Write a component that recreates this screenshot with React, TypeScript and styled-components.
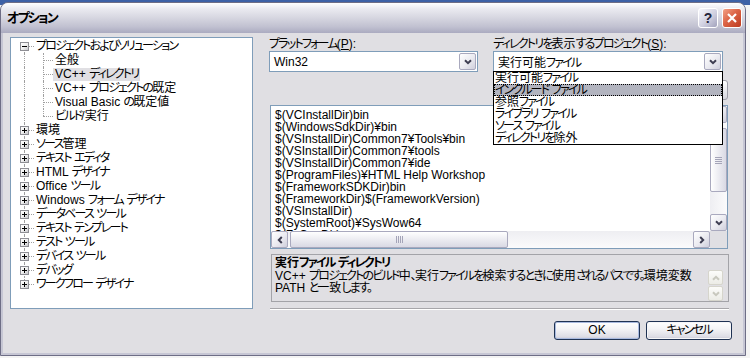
import React from 'react';
import styled, { createGlobalStyle } from 'styled-components';

const UI_FONT = '"Liberation Sans", "Noto Sans CJK JP", sans-serif';

const GlobalStyle = createGlobalStyle`
  html, body {
    margin: 0;
    padding: 0;
  }
  body {
    width: 750px;
    height: 358px;
    overflow: hidden;
    background: linear-gradient(#3D61A6 0, #3D61A6 5px, #F4F4F4 5px);
    font-family: ${UI_FONT};
    font-size: 12px;
    font-feature-settings: "palt";
    color: #000;
  }
`;

// kana in the old bitmap UI font are much narrower than in Noto, so tighten them
const KANA = /([\u3000-\u30ff\uff01-\uff60]+)/;

const Kana = styled.span`
  letter-spacing: -1.8px;
`;

const T = ({ children }: { children: string }) => (
  <>
    {children.split(KANA).map((part, i) => (KANA.test(part) ? <Kana key={i}>{part}</Kana> : part))}
  </>
);

const Window = styled.div`
  box-sizing: border-box;
  width: 746px;
  height: 354px;
  margin-top: 2px;
  display: flex;
  flex-direction: column;
  border: 1px solid #6E6E86;
  border-radius: 8px 8px 0 0;
  background: #C6C6D4;
  overflow: hidden;
`;

const TitleBar = styled.div`
  flex: none;
  height: 30px;
  display: flex;
  align-items: center;
  gap: 4px;
  padding: 0 3px 0 6px;
  background: linear-gradient(#FFFFFF 0%, #EAEAF0 20%, #D6D6E0 50%, #C0C0D0 80%, #ABABC0 100%);
`;

const TitleText = styled.div`
  flex: 1;
  font-size: 13px;
  font-weight: 700;
  line-height: 16px;
`;

const CaptionButton = styled.div<{ $close?: boolean }>`
  flex: none;
  width: 20px;
  height: 20px;
  box-sizing: border-box;
  display: flex;
  align-items: center;
  justify-content: center;
  border: 1px solid #FFFFFF;
  border-radius: 3px;
  color: #23233A;
  font-size: 14px;
  font-weight: 700;
  background: ${p =>
    p.$close
      ? 'linear-gradient(135deg, #F3A287 0%, #DC6446 45%, #BC3A1F 100%)'
      : 'linear-gradient(135deg, #F8F8FC 0%, #D0D0E0 55%, #A2A2BC 100%)'};
`;

const Body = styled.div`
  flex: 1;
  margin: 0 2px 2px;
  padding: 4px 0 0 7px;
  background: #E0DFE3;
  display: grid;
  grid-template-columns: 243px 463px;
  column-gap: 16px;
  align-items: start;
`;

/* ---------- tree ---------- */

const Tree = styled.div`
  box-sizing: border-box;
  height: 272px;
  padding: 1px 0 0 4px;
  border: 1px solid #7F9DB9;
  background: #FFFFFF;
`;

const Row = styled.div`
  display: flex;
  align-items: center;
  height: 14px;
  white-space: nowrap;
`;

type Line = 'full' | 'top' | 'bottom' | 'none';

const Gutter = styled.span<{ $v: Line; $h?: boolean }>`
  position: relative;
  flex: none;
  width: 19px;
  height: 14px;
  display: flex;
  align-items: center;
  justify-content: center;

  &::before {
    content: '';
    position: absolute;
    left: 9px;
    top: ${p => (p.$v === 'bottom' ? '7px' : '0')};
    bottom: ${p => (p.$v === 'top' ? '7px' : '0')};
    display: ${p => (p.$v === 'none' ? 'none' : 'block')};
    border-left: 1px dotted #A0A0A0;
  }

  &::after {
    content: '';
    position: absolute;
    left: 9px;
    right: 0;
    top: 7px;
    display: ${p => (p.$h ? 'block' : 'none')};
    border-top: 1px dotted #A0A0A0;
  }
`;

const Expander = styled.span<{ $open: boolean }>`
  position: relative;
  z-index: 1;
  width: 9px;
  height: 9px;
  box-sizing: border-box;
  border: 1px solid #8F8F95;
  background: linear-gradient(135deg, #FFFFFF 0%, #F0F0F0 50%, #C8C8CC 100%);

  &::before {
    content: '';
    position: absolute;
    left: 1px;
    right: 1px;
    top: 3px;
    height: 1px;
    background: #000;
  }

  &::after {
    content: '';
    position: absolute;
    top: 1px;
    bottom: 1px;
    left: 3px;
    width: 1px;
    background: #000;
    display: ${p => (p.$open ? 'none' : 'block')};
  }
`;

const ItemLabel = styled.span<{ $selected?: boolean }>`
  padding: 0 2px;
  line-height: 13px;
  background: ${p => (p.$selected ? '#E0DFE3' : 'transparent')};
`;

/* ---------- right side ---------- */

const Side = styled.div`
  display: flex;
  flex-direction: column;
`;

const ComboRow = styled.div`
  display: grid;
  grid-template-columns: 209px 230px;
  column-gap: 15px;
  position: relative;
  z-index: 5;
`;

const Field = styled.div`
  position: relative;
  display: flex;
  flex-direction: column;
`;

const Label = styled.div`
  height: 14px;
  line-height: 14px;
  white-space: nowrap;
`;

const Combo = styled.div`
  box-sizing: border-box;
  height: 21px;
  padding: 1px;
  display: flex;
  align-items: center;
  border: 1px solid #7F9DB9;
  background: #FFFFFF;
`;

const ComboText = styled.span`
  flex: 1;
  padding-left: 3px;
  white-space: nowrap;
`;

const ArrowButton = styled.div`
  flex: none;
  width: 17px;
  height: 17px;
  box-sizing: border-box;
  display: flex;
  align-items: center;
  justify-content: center;
  border: 1px solid #A9A9BE;
  border-radius: 2px;
  background: linear-gradient(135deg, #FFFFFF 0%, #EAEAF0 55%, #CFCFDC 100%);
`;

const DimArrow = styled.div`
  width: 15px;
  height: 15px;
  box-sizing: border-box;
  display: flex;
  align-items: center;
  justify-content: center;
  border: 1px solid #D6D5CC;
  border-radius: 2px;
  background: linear-gradient(#FCFCFA, #ECECE6);
`;

const rotation = { down: 0, up: 180, left: 90, right: -90 };

const ChevronSvg = styled.svg<{ $dir: keyof typeof rotation }>`
  display: block;
  transform: rotate(${p => rotation[p.$dir]}deg);
`;

const Chevron = ({ dir, color = '#3E3E52' }: { dir: keyof typeof rotation; color?: string }) => (
  <ChevronSvg $dir={dir} width="8" height="6" viewBox="0 0 8 6">
    <path d="M1 1.2 L4 4.2 L7 1.2" fill="none" stroke={color} strokeWidth="2" />
  </ChevronSvg>
);

const DropList = styled.div`
  position: absolute;
  top: 34px;
  left: 0;
  right: 0;
  box-sizing: border-box;
  height: 74px;
  border: 1px solid #000;
  background: #FFFFFF;
`;

const DropItem = styled.div<{ $active?: boolean }>`
  height: 12px;
  line-height: 12px;
  padding-left: 1px;
  white-space: nowrap;
  background: ${p => (p.$active ? '#B2B4BF' : 'transparent')};
  outline: ${p => (p.$active ? '1px dotted #000' : 'none')};
  outline-offset: -1px;
`;

const Toolbar = styled.div`
  margin: 8px 4px 0 0;
  height: 20px;
  display: flex;
  justify-content: flex-end;
  gap: 1px;
`;

const ToolButton = styled.div`
  width: 21px;
  height: 20px;
  box-sizing: border-box;
  border: 1px solid #9D9DA8;
  border-radius: 3px;
  background: linear-gradient(#FFFFFF, #D6D6DE);
`;

const ListBox = styled.div`
  box-sizing: border-box;
  width: 458px;
  height: 144px;
  margin: 5px 0 0 1px;
  border: 1px solid #7F9DB9;
  background: #FFFFFF;
  display: grid;
  grid-template-columns: 1fr 17px;
  grid-template-rows: 1fr 17px;
`;

const ListContent = styled.div`
  padding: 3px 4px 0;
  overflow: hidden;
  line-height: 12px;
  white-space: nowrap;
`;

const VScroll = styled.div`
  display: flex;
  flex-direction: column;
  background: linear-gradient(to right, #EEEEF2, #FBFBFC);
`;

const HScroll = styled.div`
  display: flex;
  background: linear-gradient(#EEEEF2, #FBFBFC);
`;

const Track = styled.div`
  flex: 1;
  display: flex;
`;

const Thumb = styled.div<{ $vertical?: boolean }>`
  box-sizing: border-box;
  display: flex;
  align-items: center;
  justify-content: center;
  border: 1px solid #A9A9BE;
  border-radius: 2px;
  ${p =>
    p.$vertical
      ? 'width: 17px; height: 64px; margin-top: 5px; background: linear-gradient(to right, #FFFFFF, #D9D9E4);'
      : 'height: 17px; width: 218px; margin-left: 2px; background: linear-gradient(#FFFFFF, #D9D9E4);'}
`;

const GripSvg = styled.svg<{ $vertical?: boolean }>`
  display: block;
  transform: rotate(${p => (p.$vertical ? 0 : 90)}deg);
`;

const Grip = ({ vertical }: { vertical?: boolean }) => (
  <GripSvg $vertical={vertical} width="7" height="7" viewBox="0 0 7 7">
    {[0.5, 2.5, 4.5, 6.5].map(y => (
      <line key={y} x1="0" y1={y} x2="7" y2={y} stroke="#A4A4B8" strokeWidth="1" />
    ))}
  </GripSvg>
);

const Corner = styled.div`
  background: #E0DFE3;
`;

const Description = styled.div`
  box-sizing: border-box;
  width: 458px;
  height: 48px;
  margin: 5px 0 0 2px;
  padding: 1px 5px 0 3px;
  border: 1px solid #A3A3A8;
  display: grid;
  grid-template-columns: 1fr 15px;
`;

const DescTitle = styled.div`
  font-weight: 700;
  line-height: 14px;
  white-space: nowrap;
`;

const DescText = styled.div`
  line-height: 12px;
  white-space: nowrap;
`;

const DescScroll = styled.div`
  display: flex;
  flex-direction: column;
  gap: 1px;
  padding-top: 14px;
`;

const Separator = styled.div`
  width: 459px;
  height: 1px;
  margin: 6px 0 0 1px;
  background: #A7A6AA;
  border-bottom: 1px solid #FFFFFF;
`;

const ButtonRow = styled.div`
  margin-top: 11px;
  display: flex;
  justify-content: flex-end;
  gap: 6px;
`;

const PushButton = styled.button<{ $default?: boolean }>`
  width: 86px;
  height: 19px;
  box-sizing: border-box;
  padding: 0;
  font-family: inherit;
  font-size: 12px;
  font-feature-settings: "palt";
  line-height: 15px;
  color: #000;
  border: 1px solid #1F3253;
  border-radius: 3px;
  background: linear-gradient(#FFFFFF 0%, #F4F4F6 40%, #DEDEE6 85%, #C9C9D5 100%);
  box-shadow: inset 0 0 0 1px ${p => (p.$default ? '#A9BADF' : '#F6F6F8')};
`;

/* ---------- data ---------- */

type TopItem = { label: string; children?: string[] };

const treeItems: TopItem[] = [
  {
    label: 'プロジェクトおよびソリューション',
    children: ['全般', 'VC++ ディレクトリ', 'VC++ プロジェクトの既定', 'Visual Basic の既定値', 'ビルド/実行'],
  },
  { label: '環境' },
  { label: 'ソース管理' },
  { label: 'テキスト エディタ' },
  { label: 'HTML デザイナ' },
  { label: 'Office ツール' },
  { label: 'Windows フォーム デザイナ' },
  { label: 'データベース ツール' },
  { label: 'テキスト テンプレート' },
  { label: 'テスト ツール' },
  { label: 'デバイス ツール' },
  { label: 'デバッグ' },
  { label: 'ワークフロー デザイナ' },
];

const selectedNode = 'VC++ ディレクトリ';

const dirKinds = ['実行可能ファイル', 'インクルード ファイル', '参照ファイル', 'ライブラリ ファイル', 'ソース ファイル', 'ディレクトリを除外'];

const paths = [
  '$(VCInstallDir)bin',
  '$(WindowsSdkDir)¥bin',
  '$(VSInstallDir)Common7¥Tools¥bin',
  '$(VSInstallDir)Common7¥tools',
  '$(VSInstallDir)Common7¥ide',
  '$(ProgramFiles)¥HTML Help Workshop',
  '$(FrameworkSDKDir)bin',
  '$(FrameworkDir)$(FrameworkVersion)',
  '$(VSInstallDir)',
  '$(SystemRoot)¥SysWow64',
  '$(FxCopDir)',
];

const App = () => {
  return (
    <>
      <GlobalStyle />
      <Window>
        <TitleBar>
          <TitleText>
            <T>オプション</T>
          </TitleText>
          <CaptionButton>?</CaptionButton>
          <CaptionButton $close>
            <svg width="10" height="10" viewBox="0 0 10 10">
              <path d="M1 1 L9 9 M9 1 L1 9" stroke="#FFFFFF" strokeWidth="2.2" />
            </svg>
          </CaptionButton>
        </TitleBar>

        <Body>
          <Tree>
            {treeItems.map((item, i) => {
              const last = i === treeItems.length - 1;
              const v: Line = i === 0 ? 'bottom' : last ? 'top' : 'full';
              const kids = item.children ?? [];
              return (
                <React.Fragment key={item.label}>
                  <Row>
                    <Gutter $v={v} $h>
                      <Expander $open={kids.length > 0} />
                    </Gutter>
                    <ItemLabel>
                      <T>{item.label}</T>
                    </ItemLabel>
                  </Row>
                  {kids.map((child, j) => (
                    <Row key={child}>
                      <Gutter $v={last ? 'none' : 'full'} />
                      <Gutter $v={j === kids.length - 1 ? 'top' : 'full'} $h />
                      <ItemLabel $selected={child === selectedNode}>
                        <T>{child}</T>
                      </ItemLabel>
                    </Row>
                  ))}
                </React.Fragment>
              );
            })}
          </Tree>

          <Side>
            <ComboRow>
              <Field>
                <Label>
                  <T>プラットフォーム</T>(<u>P</u>):
                </Label>
                <Combo>
                  <ComboText>Win32</ComboText>
                  <ArrowButton>
                    <Chevron dir="down" />
                  </ArrowButton>
                </Combo>
              </Field>
              <Field>
                <Label>
                  <T>ディレクトリを表示するプロジェクト</T>(<u>S</u>):
                </Label>
                <Combo>
                  <ComboText>
                    <T>実行可能ファイル</T>
                  </ComboText>
                  <ArrowButton>
                    <Chevron dir="down" />
                  </ArrowButton>
                </Combo>
                <DropList>
                  {dirKinds.map(kind => (
                    <DropItem key={kind} $active={kind === 'インクルード ファイル'}>
                      <T>{kind}</T>
                    </DropItem>
                  ))}
                </DropList>
              </Field>
            </ComboRow>

            <Toolbar>
              <ToolButton />
              <ToolButton />
              <ToolButton />
              <ToolButton />
            </Toolbar>

            <ListBox>
              <ListContent>
                {paths.map(p => (
                  <div key={p}>{p}</div>
                ))}
              </ListContent>
              <VScroll>
                <ArrowButton>
                  <Chevron dir="up" />
                </ArrowButton>
                <Track>
                  <Thumb $vertical>
                    <Grip vertical />
                  </Thumb>
                </Track>
                <ArrowButton>
                  <Chevron dir="down" />
                </ArrowButton>
              </VScroll>
              <HScroll>
                <ArrowButton>
                  <Chevron dir="left" />
                </ArrowButton>
                <Track>
                  <Thumb>
                    <Grip />
                  </Thumb>
                </Track>
                <ArrowButton>
                  <Chevron dir="right" />
                </ArrowButton>
              </HScroll>
              <Corner />
            </ListBox>

            <Description>
              <div>
                <DescTitle>
                  <T>実行ファイル ディレクトリ</T>
                </DescTitle>
                <DescText>
                  <T>VC++ プロジェクトのビルド中、実行ファイルを検索するときに使用されるパスです。環境変数</T>
                </DescText>
                <DescText>
                  <T>PATH と一致します。</T>
                </DescText>
              </div>
              <DescScroll>
                <DimArrow>
                  <Chevron dir="up" color="#C8C8BE" />
                </DimArrow>
                <DimArrow>
                  <Chevron dir="down" color="#C8C8BE" />
                </DimArrow>
              </DescScroll>
            </Description>

            <Separator />

            <ButtonRow>
              <PushButton $default>OK</PushButton>
              <PushButton>
                <T>キャンセル</T>
              </PushButton>
            </ButtonRow>
          </Side>
        </Body>
      </Window>
    </>
  );
};

export default App;
